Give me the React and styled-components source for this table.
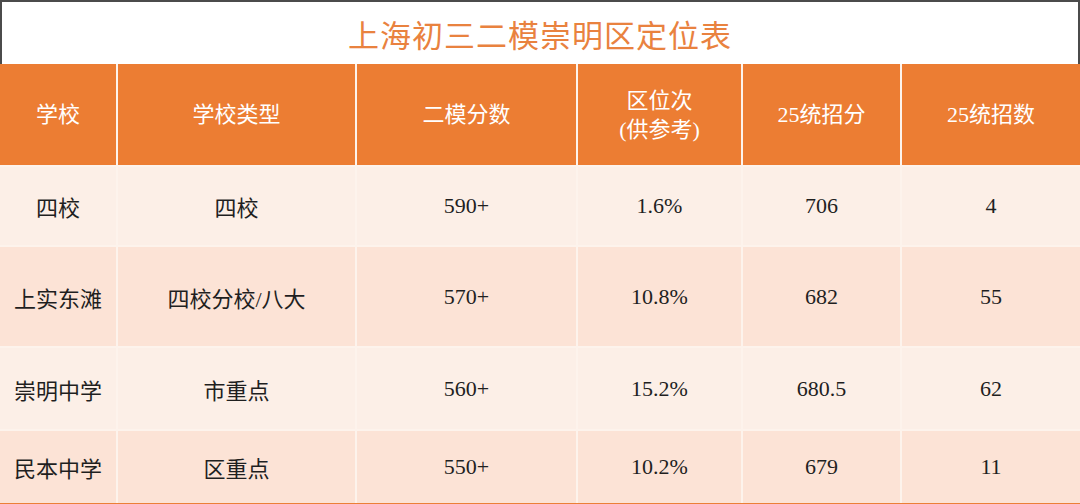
import React from 'react';
import styled, { createGlobalStyle } from 'styled-components';

const rows = [
  { school: '四校', type: '四校', score: '590+', rank: '1.6%', line: '706', count: '4', h: 78, tone: 'light' },
  { school: '上实东滩', type: '四校分校/八大', score: '570+', rank: '10.8%', line: '682', count: '55', h: 99, tone: 'dark' },
  { school: '崇明中学', type: '市重点', score: '560+', rank: '15.2%', line: '680.5', count: '62', h: 81, tone: 'light' },
  { school: '民本中学', type: '区重点', score: '550+', rank: '10.2%', line: '679', count: '11', h: 72, tone: 'dark' },
];

function App() {
  return (
    <Page>
      <GlobalStyle />
      <TitleBar>上海初三二模崇明区定位表</TitleBar>
      <Table>
        <HeadCell>学校</HeadCell>
        <HeadCell>学校类型</HeadCell>
        <HeadCell>二模分数</HeadCell>
        <HeadCell>区位次<br />(供参考)</HeadCell>
        <HeadCell>25统招分</HeadCell>
        <HeadCell>25统招数</HeadCell>
        {rows.map((r) => (
          <React.Fragment key={r.school}>
            <Cell $tone={r.tone} $h={r.h}>{r.school}</Cell>
            <Cell $tone={r.tone} $h={r.h}>{r.type}</Cell>
            <Cell $tone={r.tone} $h={r.h}>{r.score}</Cell>
            <Cell $tone={r.tone} $h={r.h}>{r.rank}</Cell>
            <Cell $tone={r.tone} $h={r.h}>{r.line}</Cell>
            <Cell $tone={r.tone} $h={r.h}>{r.count}</Cell>
          </React.Fragment>
        ))}
      </Table>
    </Page>
  );
}

const GlobalStyle = createGlobalStyle`
  html, body {
    margin: 0;
    padding: 0;
    background: #ffffff;
  }
  body {
    font-family: "Liberation Serif", "Noto Sans CJK SC", serif;
  }
`;

const Page = styled.div`
  width: 1080px;
  height: 504px;
  overflow: hidden;
  display: flex;
  flex-direction: column;
`;

const TitleBar = styled.div`
  flex: none;
  height: 64px;
  box-sizing: border-box;
  border-top: 2px solid #4b4b4b;
  border-left: 2px solid #4b4b4b;
  border-right: 2px solid #4b4b4b;
  display: flex;
  align-items: center;
  justify-content: center;
  color: #e9823f;
  font-size: 31px;
  letter-spacing: 1px;
`;

const Table = styled.div`
  flex: none;
  display: grid;
  grid-template-columns: 116px 237px 219px 163px 157px 1fr;
  grid-template-rows: 101px;
  gap: 2px;
  background: #fdf3ec;
  border-bottom: 3px solid #ec7f37;
`;

const HeadCell = styled.div`
  background: #ec7d33;
  color: #ffffff;
  font-size: 22px;
  line-height: 29px;
  display: flex;
  align-items: center;
  justify-content: center;
  text-align: center;
  height: 101px;
`;

const Cell = styled.div`
  height: ${(p) => p.$h}px;
  background: ${(p) => (p.$tone === 'light' ? '#fcefe7' : '#fce3d6')};
  color: #1f1f1f;
  font-size: 22px;
  display: flex;
  align-items: center;
  justify-content: center;
  text-align: center;
  white-space: nowrap;
`;

export default App;
